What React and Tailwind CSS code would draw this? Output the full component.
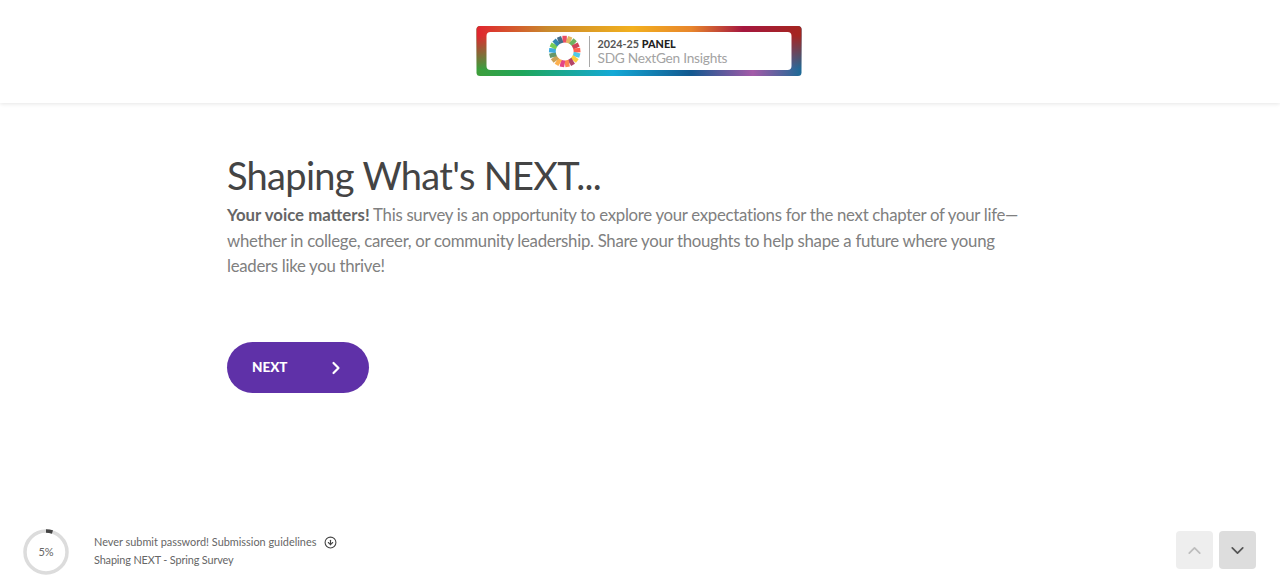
import React from "react";
import { ChevronRight, ChevronUp, ChevronDown, CircleArrowDown } from "lucide-react";

const sdgColors = ["#e5243b", "#dda63a", "#4c9f38", "#c5192d", "#ff3a21", "#26bde2", "#fcc30b", "#a21942", "#fd6925", "#dd1367", "#fd9d24", "#bf8b2e", "#3f7e44", "#0a97d9", "#56c02b", "#00689d", "#19486a"];

function Logo() {
  return (
    <svg width="326" height="52" viewBox="0 0 326 52" className="block mr-[2px] mb-[2px]">
      <defs>
        <linearGradient id="top" x1="0" x2="1" y1="0" y2="0">
          <stop offset="0" stopColor="#e0242f" />
          <stop offset="0.22" stopColor="#c98a2c" />
          <stop offset="0.48" stopColor="#f2b01e" />
          <stop offset="0.66" stopColor="#e8862c" />
          <stop offset="0.82" stopColor="#a5173f" />
          <stop offset="1" stopColor="#a5261f" />
        </linearGradient>
        <linearGradient id="bottom" x1="0" x2="1" y1="0" y2="0">
          <stop offset="0" stopColor="#3f9e3b" />
          <stop offset="0.14" stopColor="#1fa65a" />
          <stop offset="0.42" stopColor="#14a9d6" />
          <stop offset="0.66" stopColor="#12588f" />
          <stop offset="0.85" stopColor="#a45aa8" />
          <stop offset="1" stopColor="#1d6a96" />
        </linearGradient>
        <linearGradient id="fadeMask" x1="0" x2="0" y1="0" y2="1">
          <stop offset="0.2" stopColor="#fff" />
          <stop offset="0.85" stopColor="#000" />
        </linearGradient>
        <mask id="topFade"><rect width="326" height="52" fill="url(#fadeMask)" /></mask>
        <filter id="soft"><feGaussianBlur stdDeviation="0.7" /></filter>
      </defs>
      <rect x="0.5" y="1" width="325" height="50" rx="3.5" fill="url(#bottom)" />
      <rect x="0.5" y="1" width="325" height="50" rx="3.5" fill="url(#top)" mask="url(#topFade)" />
      <rect x="10.5" y="7" width="305" height="38" rx="4" fill="#fff" />
      <g filter="url(#soft)" opacity="0.8">
        {sdgColors.map((c, i) => (
          <rect key={c} x="86.4" y="10.8" width="4.4" height="6.8" fill={c} transform={`rotate(${(i * 360) / 17} 88.7 26.5)`} />
        ))}
      </g>
      <rect x="113" y="11" width="1" height="31" fill="#a8a8a8" />
      <text x="121.5" y="22.5" fontFamily="Lato, sans-serif" fontSize="10.8" fontWeight="700" fill="#555">
        2024-25 <tspan fontWeight="900" fill="#222">PANEL</tspan>
      </text>
      <text x="121.5" y="37.5" fontFamily="Lato, sans-serif" fontSize="13.7" letterSpacing="-0.25" fill="#a3a3a3">SDG NextGen Insights</text>
    </svg>
  );
}

function ProgressRing() {
  return (
    <div className="relative w-[46px] h-[46px] shrink-0">
      <svg width="46" height="46" viewBox="0 0 46 46">
        <circle cx="23" cy="23" r="21" fill="none" stroke="#dcdcdc" strokeWidth="3.5" />
        <circle cx="23" cy="23" r="21" fill="none" stroke="#444" strokeWidth="3.5" strokeDasharray="6.6 125.4" transform="rotate(-90 23 23)" />
      </svg>
      <div className="absolute inset-0 flex items-center justify-center text-[11px] text-[#666]">5%</div>
    </div>
  );
}

export default function App() {
  return (
    <div className="h-screen flex flex-col bg-white font-['Lato',sans-serif] overflow-hidden">
      <header className="h-[103px] shrink-0 flex items-center justify-center shadow-[0_1px_4px_rgba(0,0,0,0.1)]">
        <Logo />
      </header>

      <main className="flex-1 pl-[227px] pt-[46px]">
        <h1 className="text-[38px] leading-[52px] text-[#444] tracking-[-0.7px]">Shaping What's NEXT...</h1>
        <p className="mt-[1px] w-[830px] text-[16.8px] leading-[25.5px] text-[#808080] tracking-[-0.29px]">
          <strong className="font-bold text-[#666] tracking-normal">Your voice matters!</strong> This survey is an opportunity to explore your expectations for the next chapter of your life—
          <br />
          whether in college, career, or community leadership. Share your thoughts to help shape a future where young
          <br />
          leaders like you thrive!
        </p>
        <button className="mt-[63px] w-[142px] h-[51px] rounded-full bg-[#5f31a8] text-white flex items-center justify-between pl-[25px] pr-[23px] pt-[1px] text-[13.5px] font-black">
          NEXT
          <ChevronRight size={20} strokeWidth={2.6} />
        </button>
      </main>

      <footer className="shrink-0 h-[56px] flex items-start pl-[23px] pr-[24px] pt-[1px]">
        <ProgressRing />
        <div className="ml-[25px] pt-[4px] text-[10.9px] leading-[18px] text-[#666]">
          <div className="flex items-center">
            Never submit password! Submission guidelines
            <CircleArrowDown size={13} className="ml-[8px] text-[#444]" />
          </div>
          <div className="tracking-[-0.14px]">Shaping NEXT - Spring Survey</div>
        </div>
        <div className="ml-auto flex gap-[6px] pt-[2px]">
          <button className="w-[37px] h-[38px] rounded bg-[#eeeeee] flex items-center justify-center text-[#bdbdbd]">
            <ChevronUp size={21} strokeWidth={2} />
          </button>
          <button className="w-[37px] h-[38px] rounded bg-[#dddddd] flex items-center justify-center text-[#555]">
            <ChevronDown size={21} strokeWidth={2} />
          </button>
        </div>
      </footer>
    </div>
  );
}
